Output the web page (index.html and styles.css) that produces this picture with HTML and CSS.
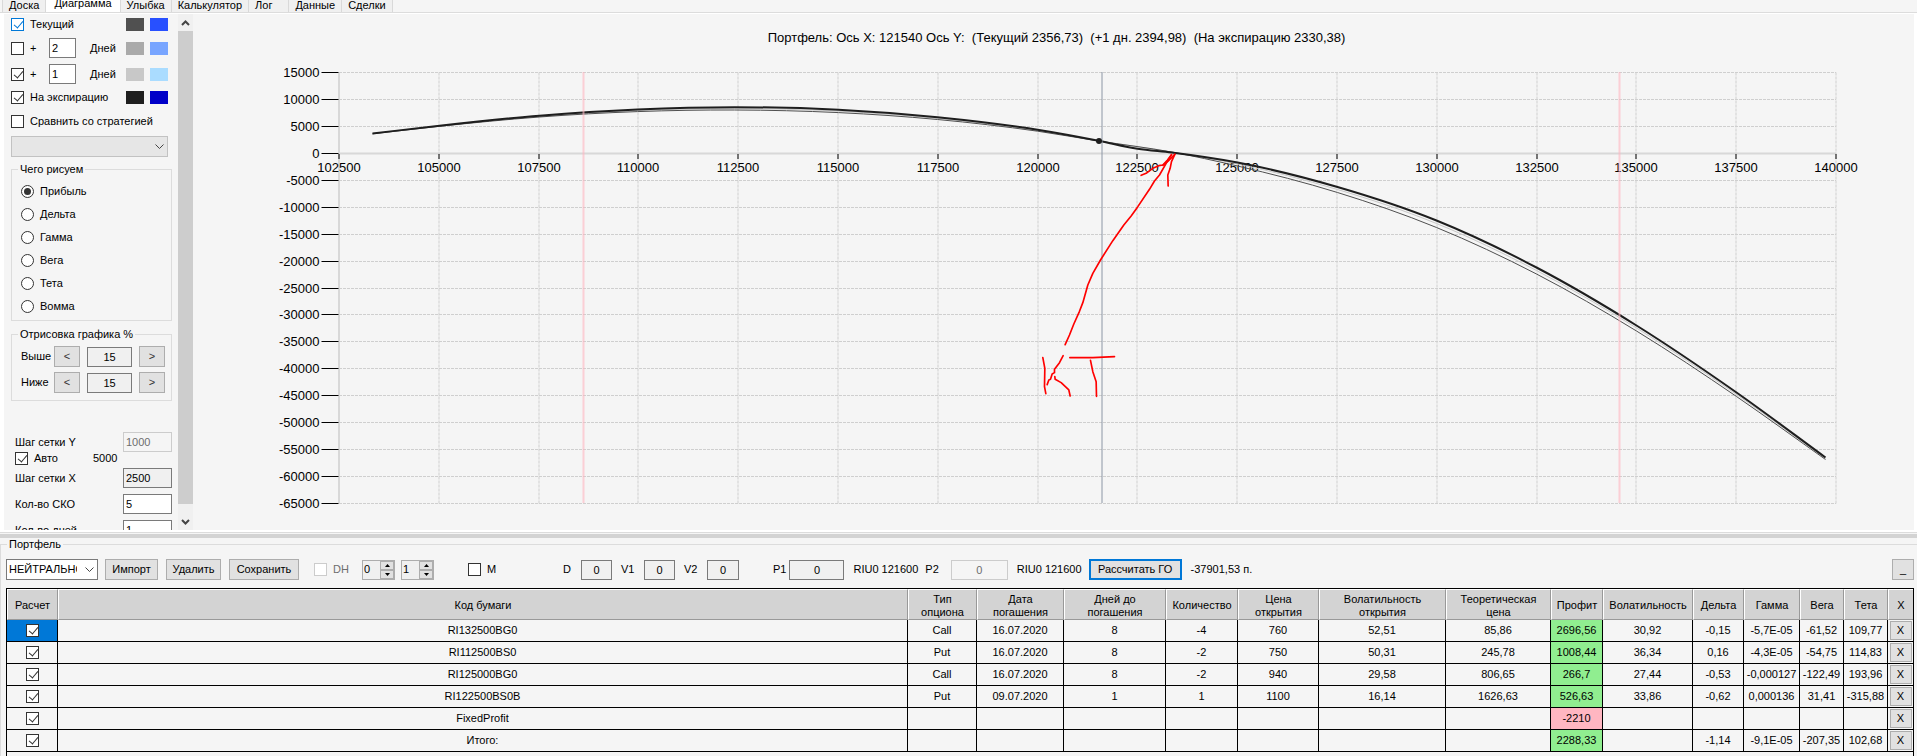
FILE: index.html
```html
<!DOCTYPE html>
<html lang="ru">
<head>
  <meta charset="UTF-8">
  <meta name="viewport" content="width=device-width, initial-scale=1.0">
  <title>Портфель</title>
  <link rel="stylesheet" href="styles.css">
</head>
<body>
  <div class="tabs" role="tablist">
    <button class="tab" role="tab">Доска</button>
    <button class="tab active" role="tab" aria-selected="true">Диаграмма</button>
    <button class="tab" role="tab">Улыбка</button>
    <button class="tab" role="tab">Калькулятор</button>
    <button class="tab tab-log" role="tab">Лог</button>
    <button class="tab" role="tab">Данные</button>
    <button class="tab" role="tab">Сделки</button>
  </div>

  <main class="workspace">
    <aside class="side">
      <div class="row">
        <label class="check"><input type="checkbox" class="focused" checked>Текущий</label>
        <span class="swatches"><i class="swatch gray1"></i><i class="swatch blue1"></i></span>
      </div>
      <div class="row tall">
        <label class="check plus"><input type="checkbox">+</label>
        <input class="field days" type="text" id="days1" value="2">
        <label for="days1">Дней</label>
        <span class="swatches"><i class="swatch gray2"></i><i class="swatch blue2"></i></span>
      </div>
      <div class="row tall">
        <label class="check plus"><input type="checkbox" checked>+</label>
        <input class="field days" type="text" id="days2" value="1">
        <label for="days2">Дней</label>
        <span class="swatches"><i class="swatch gray3"></i><i class="swatch blue3"></i></span>
      </div>
      <div class="row">
        <label class="check"><input type="checkbox" checked>На экспирацию</label>
        <span class="swatches"><i class="swatch gray4"></i><i class="swatch blue4"></i></span>
      </div>
      <div class="row tall">
        <label class="check"><input type="checkbox">Сравнить со стратегией</label>
      </div>
      <div class="select strategy">
        <select aria-label="Стратегия" disabled><option></option></select>
        <svg width="9" height="6" viewBox="0 0 9 6"><path d="M0.5 0.5 L4.5 4.5 L8.5 0.5"/></svg>
      </div>

      <fieldset class="group kinds">
        <legend>Чего рисуем</legend>
        <label><input type="radio" name="kind" checked>Прибыль</label>
        <label><input type="radio" name="kind">Дельта</label>
        <label><input type="radio" name="kind">Гамма</label>
        <label><input type="radio" name="kind">Вега</label>
        <label><input type="radio" name="kind">Тета</label>
        <label><input type="radio" name="kind">Вомма</label>
      </fieldset>

      <fieldset class="group range">
        <legend>Отрисовка графика %</legend>
        <div class="range-row">
          <label for="above">Выше</label>
          <button>&lt;</button>
          <input class="field" type="text" id="above" value="15" readonly>
          <button>&gt;</button>
        </div>
        <div class="range-row">
          <label for="below">Ниже</label>
          <button>&lt;</button>
          <input class="field" type="text" id="below" value="15" readonly>
          <button>&gt;</button>
        </div>
      </fieldset>

      <div class="steps">
        <div class="step"><label for="stepY">Шаг сетки Y</label><input class="field" type="text" id="stepY" value="1000" disabled></div>
        <div class="auto"><label class="check"><input type="checkbox" checked>Авто</label><span>5000</span></div>
        <div class="step"><label for="stepX">Шаг сетки X</label><input class="field" type="text" id="stepX" value="2500" readonly></div>
        <div class="step"><label for="sko">Кол-во СКО</label><input class="field" type="text" id="sko" value="5"></div>
        <div class="step"><label for="dayCount">Кол-во дней</label><input class="field" type="text" id="dayCount" value="1"></div>
      </div>
    </aside>

    <div class="scrollbar" aria-hidden="true">
      <svg width="9" height="6" viewBox="0 0 9 6"><path d="M1 5 L4.5 1.5 L8 5"/></svg>
      <div class="thumb"></div>
      <svg width="9" height="6" viewBox="0 0 9 6"><path d="M1 1 L4.5 4.5 L8 1"/></svg>
    </div>

    <section class="chart">
      <svg id="chart" viewBox="194 14 1720 516">
        <text class="title" x="1057" y="42" text-anchor="middle">Портфель: Ось X: 121540 Ось Y:  (Текущий 2356,73)  (+1 дн. 2394,98)  (На экспирацию 2330,38)</text>
        <g id="grid"></g>
        <g id="axis"></g>
        <g id="curves"></g>
        <line class="sigma" x1="584" y1="72" x2="584" y2="503"/>
        <line class="sigma" x1="1620" y1="72" x2="1620" y2="503"/>
        <line class="price" x1="1102.5" y1="72" x2="1102.5" y2="503"/>
        <circle class="dot" cx="1099.5" cy="141" r="3"/>
        <g class="marker" transform="translate(1000 120) scale(0.3333)">
          <path d="M197 674 L210 645 L223 612 L240 574 L250 548 L265 495 L280 460 L303 420 L340 362 L373 315 L395 288 L415 260 L450 208 L465 183 L480 165 L500 130 L516 104"/>
          <path d="M526 103 L516 125 L512 145 L505 165 L506 198"/>
          <path d="M516 104 L504 120 L490 135 L478 137 L460 145 L440 160 L425 166"/>
          <path d="M526 103 L505 124 L490 136"/>
          <path d="M130 713 L136 745 L135 800 L139 821"/>
          <path d="M191 707 L180 728 L165 748 L165 758 L158 762 L153 778 L148 780 L143 794"/>
          <path d="M166 770 L167 778 L185 788 L208 810 L212 828"/>
          <path d="M211 713 L280 713 L345 710"/>
          <path d="M273 721 L280 755 L290 785 L291 829"/>
        </g>
      </svg>
    </section>
  </main>

  <div class="splitter"></div>

  <fieldset class="group portfolio">
    <legend>Портфель</legend>
    <div class="toolbar">
      <div class="select book">
        <select aria-label="Портфель"><option>НЕЙТРАЛЬНО</option></select>
        <svg width="9" height="6" viewBox="0 0 9 6"><path d="M0.5 0.5 L4.5 4.5 L8.5 0.5"/></svg>
      </div>
      <button class="import">Импорт</button>
      <button class="delete">Удалить</button>
      <button class="save">Сохранить</button>
      <label class="check dh"><input type="checkbox" disabled>DH</label>
      <div class="spinner">
        <input type="text" aria-label="DH от" value="0">
        <button aria-label="Больше"><svg width="5" height="3"><path d="M0 3 L2.5 0 L5 3 Z"/></svg></button>
        <button aria-label="Меньше"><svg width="5" height="3"><path d="M0 0 L2.5 3 L5 0 Z"/></svg></button>
      </div>
      <div class="spinner">
        <input type="text" aria-label="DH до" value="1">
        <button aria-label="Больше"><svg width="5" height="3"><path d="M0 3 L2.5 0 L5 3 Z"/></svg></button>
        <button aria-label="Меньше"><svg width="5" height="3"><path d="M0 0 L2.5 3 L5 0 Z"/></svg></button>
      </div>
      <label class="check mini"><input type="checkbox">М</label>
      <div class="greeks">
        <label for="d">D</label><input class="field" type="text" id="d" value="0" readonly>
        <label for="v1">V1</label><input class="field" type="text" id="v1" value="0" readonly>
        <label for="v2">V2</label><input class="field" type="text" id="v2" value="0" readonly>
      </div>
      <div class="prices">
        <label for="p1">P1</label><input class="field" type="text" id="p1" value="0" readonly>
        <span>RIU0 121600</span>
      </div>
      <div class="prices second">
        <label for="p2">P2</label><input class="field" type="text" id="p2" value="0" disabled>
        <span>RIU0 121600</span>
      </div>
      <button class="calc">Рассчитать ГО</button>
      <span>-37901,53 п.</span>
      <button class="collapse">_</button>
    </div>

    <div class="table-wrap">
      <table>
        <colgroup>
          <col class="w51"><col><col class="w69"><col class="w87"><col class="w102"><col class="w72"><col class="w81"><col class="w127"><col class="w105"><col class="w52"><col class="w90"><col class="w51"><col class="w56"><col class="w44"><col class="w44"><col class="w25">
        </colgroup>
        <thead>
          <tr>
            <th>Расчет</th><th>Код бумаги</th><th>Тип<br>опциона</th><th>Дата<br>погашения</th><th>Дней до<br>погашения</th><th>Количество</th><th>Цена<br>открытия</th><th>Волатильность<br>открытия</th><th>Теоретическая<br>цена</th><th>Профит</th><th>Волатильность</th><th>Дельта</th><th>Гамма</th><th>Вега</th><th>Тета</th><th>X</th>
          </tr>
        </thead>
        <tbody>
          <tr>
            <td class="selected"><input type="checkbox" aria-label="Расчет RI132500BG0" checked></td><td>RI132500BG0</td><td>Call</td><td>16.07.2020</td><td>8</td><td>-4</td><td>760</td><td>52,51</td><td>85,86</td><td class="plus">2696,56</td><td>30,92</td><td>-0,15</td><td>-5,7E-05</td><td>-61,52</td><td>109,77</td><td><button>X</button></td>
          </tr>
          <tr>
            <td><input type="checkbox" aria-label="Расчет RI112500BS0" checked></td><td>RI112500BS0</td><td>Put</td><td>16.07.2020</td><td>8</td><td>-2</td><td>750</td><td>50,31</td><td>245,78</td><td class="plus">1008,44</td><td>36,34</td><td>0,16</td><td>-4,3E-05</td><td>-54,75</td><td>114,83</td><td><button>X</button></td>
          </tr>
          <tr>
            <td><input type="checkbox" aria-label="Расчет RI125000BG0" checked></td><td>RI125000BG0</td><td>Call</td><td>16.07.2020</td><td>8</td><td>-2</td><td>940</td><td>29,58</td><td>806,65</td><td class="plus">266,7</td><td>27,44</td><td>-0,53</td><td>-0,000127</td><td>-122,49</td><td>193,96</td><td><button>X</button></td>
          </tr>
          <tr>
            <td><input type="checkbox" aria-label="Расчет RI122500BS0B" checked></td><td>RI122500BS0B</td><td>Put</td><td>09.07.2020</td><td>1</td><td>1</td><td>1100</td><td>16,14</td><td>1626,63</td><td class="plus">526,63</td><td>33,86</td><td>-0,62</td><td>0,000136</td><td>31,41</td><td>-315,88</td><td><button>X</button></td>
          </tr>
          <tr>
            <td><input type="checkbox" aria-label="Расчет FixedProfit" checked></td><td>FixedProfit</td><td></td><td></td><td></td><td></td><td></td><td></td><td></td><td class="minus">-2210</td><td></td><td></td><td></td><td></td><td></td><td><button>X</button></td>
          </tr>
          <tr>
            <td><input type="checkbox" aria-label="Расчет Итого" checked></td><td>Итого:</td><td></td><td></td><td></td><td></td><td></td><td></td><td></td><td class="plus">2288,33</td><td></td><td>-1,14</td><td>-9,1E-05</td><td>-207,35</td><td>102,68</td><td><button>X</button></td>
          </tr>
        </tbody>
      </table>
    </div>
  </fieldset>

  <script src="chart.js"></script>
</body>
</html>
```
FILE: styles.css
```css
* {
  box-sizing: border-box;
}
body {
  margin: 0;
  height: 100vh;
  display: flex;
  flex-direction: column;
  overflow: hidden;
  background: #f5f5f5;
  color: #000;
  font-family: "Liberation Sans", Arial, sans-serif;
  font-size: 11px;
  line-height: 13px;
}
button, input, select {
  font: inherit;
  color: inherit;
  margin: 0;
  padding: 0;
  border-radius: 0;
}
button {
  background: #e1e1e1;
  border: 1px solid #adadad;
}

/* tabs */
.tabs {
  flex: none;
  height: 13px;
  display: flex;
  align-items: flex-end;
  padding-left: 2px;
  border-bottom: 1px solid #dcdcdc;
}
.tab {
  flex: none;
  padding: 0 6px 1px;
  line-height: 12px;
  background: #f0f0f0;
  border: solid #d9d9d9;
  border-width: 0 1px 0 0;
}
.tab:first-child {
  border-left-width: 1px;
}
.tab.active {
  padding: 0 8px 3px;
  background: #fff;
}
.tab-log {
  padding-right: 16px;
}

/* top part */
.workspace {
  flex: 1;
  min-height: 0;
  display: flex;
  border: solid #fff;
  border-width: 1px 3px 2px 4px;
}
.side {
  flex: none;
  width: 174px;
  padding: 0 6px 0 7px;
  overflow: hidden;
}
.row {
  height: 21px;
  display: flex;
  align-items: center;
}
.row.tall {
  height: 26px;
}
.check {
  display: flex;
  align-items: center;
  gap: 6px;
}
.check.plus {
  width: 38px;
}
input[type="checkbox"], input[type="radio"] {
  appearance: none;
  flex: none;
  position: relative;
  width: 13px;
  height: 13px;
  background: #fff;
  border: 1px solid #333;
}
input[type="checkbox"]:checked::after {
  content: "";
  position: absolute;
  left: 4px;
  top: 0;
  width: 4px;
  height: 8px;
  border: solid #333;
  border-width: 0 1px 1px 0;
  transform: rotate(40deg);
}
input[type="checkbox"].focused, input[type="checkbox"].focused::after {
  border-color: #0078d7;
}
input[type="checkbox"]:disabled {
  border-color: #ccc;
}
input[type="radio"] {
  border-radius: 50%;
}
input[type="radio"]:checked::after {
  content: "";
  position: absolute;
  left: 2px;
  top: 2px;
  width: 7px;
  height: 7px;
  border-radius: 50%;
  background: #333;
}
.field {
  height: 20px;
  padding: 0 2px;
  background: #fff;
  border: 1px solid #7a7a7a;
}
.field:read-only {
  background: #f0f0f0;
}
.field:disabled {
  background: #f5f5f5;
  border-color: #ccc;
  color: #6d6d6d;
}
.days {
  width: 27px;
  margin-right: 14px;
}
.swatches {
  display: flex;
  gap: 6px;
  margin-left: auto;
  padding-right: 4px;
}
.swatch {
  width: 18px;
  height: 13px;
}
.gray1 { background: #505050; }
.gray2 { background: #aaa; }
.gray3 { background: #c8c8c8; }
.gray4 { background: #1e1e1e; }
.blue1 { background: #2850ff; }
.blue2 { background: #78a5ff; }
.blue3 { background: #aadcff; }
.blue4 { background: #0000c8; }

.select {
  position: relative;
}
.select select {
  appearance: none;
  width: 100%;
  height: 21px;
  padding: 0 20px 0 2px;
  background: #fff;
  border: 1px solid #7a7a7a;
}
.select select:disabled {
  background: #e1e1e1;
  border-color: #adadad;
}
.select svg {
  position: absolute;
  right: 4px;
  top: 8px;
  pointer-events: none;
}
.select path, .scrollbar path {
  fill: none;
  stroke: #444;
}
.strategy {
  width: 157px;
  margin-top: 2px;
}

.group {
  min-width: 0;
  margin: 0;
  padding: 0;
  border: 1px solid #dcdcdc;
}
.group legend {
  padding: 0 2px;
  margin-left: 7px;
}
.kinds {
  margin-top: 6px;
  padding: 4px 9px 2px;
}
.kinds legend, .range legend {
  margin-left: -3px;
}
.kinds label {
  display: flex;
  align-items: center;
  gap: 6px;
  height: 23px;
}
.range {
  margin-top: 7px;
  padding: 5px 6px 7px 9px;
}
.range-row {
  display: flex;
  align-items: center;
  gap: 7px;
}
.range-row + .range-row {
  margin-top: 5px;
}
.range-row label {
  width: 26px;
}
.range-row button {
  width: 26px;
  height: 21px;
  color: #333;
}
.range-row .field {
  width: 45px;
  text-align: center;
}
.steps {
  margin-top: 31px;
  padding-left: 4px;
}
.step {
  display: flex;
  align-items: center;
  justify-content: space-between;
  margin-bottom: 6px;
}
.step:first-child {
  margin-bottom: 0;
}
.step .field {
  width: 49px;
}
.auto {
  display: flex;
  gap: 21px;
  align-items: center;
  height: 13px;
  margin-bottom: 3px;
}
.auto .check {
  width: 57px;
}

.scrollbar {
  flex: none;
  width: 15px;
  padding: 6px 0 5px;
  display: flex;
  flex-direction: column;
  align-items: center;
  gap: 5px;
  background: #f0f0f0;
}
.scrollbar path {
  stroke-width: 2;
}
.thumb {
  flex: 1;
  width: 15px;
  margin-bottom: 10px;
  background: #cdcdcd;
}

/* chart */
.chart {
  flex: 1;
  min-width: 0;
}
.chart svg {
  display: block;
  width: 100%;
  height: 100%;
}
.chart text {
  font-size: 13px;
}
.chart .title {
  white-space: pre;
}
.grid-line {
  stroke: #cfcfcf;
  stroke-dasharray: 3 1;
}
.base-line {
  stroke: #d8d8d8;
  stroke-width: 2;
}
.tick {
  stroke: #000;
}
.sigma {
  stroke: #ffb6c1;
  stroke-width: 2;
  opacity: 0.6;
}
.price {
  stroke: #8c96a5;
}
.curve {
  fill: none;
}
.curve.now {
  stroke: #505050;
}
.curve.next {
  stroke: #c8c8c8;
}
.curve.expiry {
  stroke: #1e1e1e;
  stroke-width: 2;
}
.dot {
  fill: #1e1e1e;
}
.marker path {
  fill: none;
  stroke: #f00;
  stroke-width: 5;
  stroke-linecap: round;
  stroke-linejoin: round;
}

.splitter {
  flex: none;
  height: 6px;
  border-top: 1px solid #dcdcdc;
  border-bottom: 4px solid #d3d3d3;
}

/* portfolio */
.portfolio {
  flex: none;
  padding: 0 3px 0 5px;
  border-right: none;
  border-bottom: none;
}
.portfolio > legend {
  margin-left: 1px;
}
.toolbar {
  display: flex;
  align-items: center;
  height: 37px;
}
.toolbar > button {
  flex: none;
  height: 21px;
}
.book {
  width: 92px;
  margin-right: 7px;
}
.book select {
  overflow: hidden;
  text-overflow: clip;
}
.import {
  width: 53px;
  margin-right: 8px;
}
.delete {
  width: 55px;
  margin-right: 8px;
}
.save {
  width: 70px;
  margin-right: 15px;
}
.dh {
  width: 48px;
  color: #6d6d6d;
}
.spinner {
  display: grid;
  grid-template-columns: 17px 14px;
  grid-template-rows: 9px 9px;
  width: 33px;
  height: 20px;
  margin-right: 6px;
  border: 1px solid #adadad;
}
.spinner input {
  grid-row: span 2;
  width: 17px;
  padding-left: 1px;
  border: none;
  background: #f0f0f0;
}
.spinner button {
  display: flex;
  align-items: center;
  justify-content: center;
}
.mini {
  width: 95px;
  margin-left: 28px;
}
.greeks {
  display: grid;
  grid-template-columns: 18px 31px 32px 31px 32px 32px;
  align-items: center;
}
.greeks label:not(:first-child) {
  padding-left: 9px;
}
.greeks .field, .prices .field {
  text-align: center;
}
.prices {
  display: flex;
  align-items: center;
  margin-left: 34px;
}
.prices .field {
  width: 55px;
  margin: 0 9px 0 3px;
}
.prices.second {
  margin: 0 7px;
}
.prices.second .field {
  width: 57px;
  margin-left: 12px;
}
.toolbar > .calc {
  width: 93px;
  margin-right: 9px;
  border: 2px solid #0078d7;
}
.toolbar > .collapse {
  width: 22px;
  margin-left: auto;
}

.table-wrap {
  padding-bottom: 4px;
  border: solid #000;
  border-width: 1px 1px 0 1px;
}
table {
  width: 100%;
  table-layout: fixed;
  border-collapse: separate;
  border-spacing: 0;
}
.w25 { width: 25px; }
.w44 { width: 44px; }
.w51 { width: 51px; }
.w52 { width: 52px; }
.w56 { width: 56px; }
.w69 { width: 69px; }
.w72 { width: 72px; }
.w81 { width: 81px; }
.w87 { width: 87px; }
.w90 { width: 90px; }
.w102 { width: 102px; }
.w105 { width: 105px; }
.w127 { width: 127px; }
th {
  height: 31px;
  padding: 2px 0 0;
  font-weight: normal;
  white-space: nowrap;
  background: #d3d3d3;
  border-top: 1px solid #fff;
  border-bottom: 1px solid #999;
  border-right: 1px solid #999;
  border-left: 1px solid #fff;
}
td {
  height: 22px;
  padding: 0;
  text-align: center;
  white-space: nowrap;
  border-right: 1px solid #000;
  border-bottom: 1px solid #000;
}
td:last-child, th:last-child {
  border-right: none;
}
td input[type="checkbox"] {
  display: block;
  margin: 0 auto;
}
td button {
  display: block;
  width: 22px;
  height: 19px;
  margin: 0 auto;
}
.selected {
  background: #0078d7;
}
td.plus {
  background: #90ee90;
}
td.minus {
  background: #ffb6c1;
}
```
FILE: chart.js
```js
const NS = "http://www.w3.org/2000/svg";
const plot = { left: 339.5, right: 1836.5, top: 72.5, bottom: 503.5 };

const grid = document.getElementById("grid");
const axis = document.getElementById("axis");
const curves = document.getElementById("curves");

function add(parent, name, attrs, text) {
  const el = document.createElementNS(NS, name);
  for (const key in attrs) el.setAttribute(key, attrs[key]);
  if (text !== undefined) el.textContent = text;
  parent.appendChild(el);
}

function line(parent, cls, x1, y1, x2, y2) {
  add(parent, "line", { class: cls, x1, y1, x2, y2 });
}

// keep 1px lines on the pixel grid
const snap = v => Math.floor(v) + 0.5;

// profit axis
for (let value = 15000; value >= -65000; value -= 5000) {
  const y = snap(plot.top + (15000 - value) / 80000 * (plot.bottom - plot.top));
  line(grid, value === 0 ? "base-line" : "grid-line", plot.left, y, plot.right, y);
  line(axis, "tick", 322, y, 339, y);
  add(axis, "text", { x: 320, y: y + 4, "text-anchor": "end" }, value);
}

// price axis
for (let price = 102500; price <= 140000; price += 2500) {
  const x = snap(plot.left + (price - 102500) / 37500 * (plot.right - plot.left));
  line(grid, price === 102500 ? "base-line" : "grid-line", x, plot.top, x, plot.bottom);
  line(axis, "tick", x, 154, x, 159);
  add(axis, "text", { x, y: 172, "text-anchor": "middle" }, price);
}

const expiry = [[373, 133.5], [440, 125.7], [540, 115.7], [638, 109.5], [735, 107.2], [839, 109.8], [938, 117.3], [1038, 129.8], [1099, 140.8], [1138, 148.8], [1172, 152.6], [1238, 162.6], [1338, 187], [1437, 220.5], [1537, 267.5], [1637, 325.5], [1737, 392.5], [1826, 457.5]];
const now = [[373, 133.8], [440, 126.3], [540, 117], [638, 111.6], [735, 110], [839, 112.6], [938, 119.5], [1038, 131.2], [1099, 141], [1172, 152], [1238, 166], [1338, 192.5], [1437, 227.5], [1537, 274], [1637, 331], [1737, 396.5], [1826, 459.5]];
const next = [[373, 133.6], [440, 126], [540, 116.4], [638, 110.6], [735, 108.6], [839, 111.2], [938, 118.4], [1038, 130.5], [1099, 140.8], [1172, 152], [1238, 164], [1338, 189.5], [1437, 223.5], [1537, 270.5], [1637, 328], [1737, 394.5], [1826, 458.5]];

function smooth(points) {
  const last = points.length - 1;
  const secant = i => (points[i + 1][1] - points[i][1]) / (points[i + 1][0] - points[i][0]);
  const slope = points.map((p, i) => {
    if (i === 0) return secant(0);
    if (i === last) return secant(last - 1);
    const before = p[0] - points[i - 1][0];
    const after = points[i + 1][0] - p[0];
    return (secant(i - 1) * after + secant(i) * before) / (before + after);
  });
  let d = "M" + points[0];
  for (let i = 1; i <= last; i++) {
    const [x0, y0] = points[i - 1];
    const [x1, y1] = points[i];
    const dx = (x1 - x0) / 3;
    d += ` C${x0 + dx},${y0 + slope[i - 1] * dx} ${x1 - dx},${y1 - slope[i] * dx} ${x1},${y1}`;
  }
  return d;
}

add(curves, "path", { class: "curve next", d: smooth(next) });
add(curves, "path", { class: "curve now", d: smooth(now) });
add(curves, "path", { class: "curve expiry", d: smooth(expiry) });
```
